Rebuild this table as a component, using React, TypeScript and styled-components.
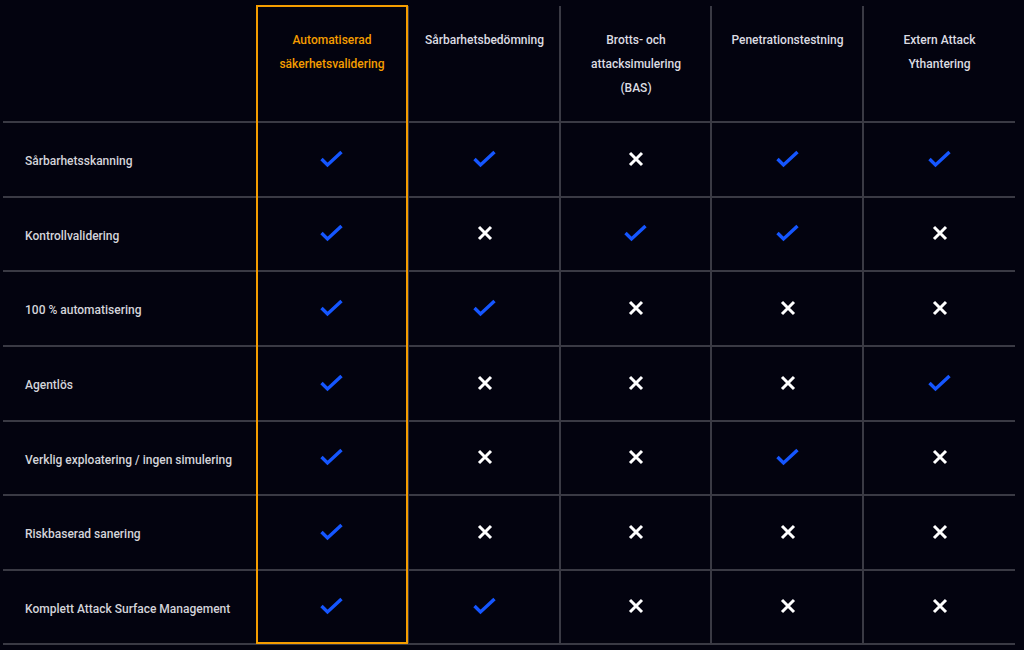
import React from "react";
import styled, { createGlobalStyle } from "styled-components";

const GlobalStyle = createGlobalStyle`
  html, body {
    margin: 0;
    padding: 0;
    background: #03030f;
  }
  body {
    font-family: Roboto, "Noto Sans", "Liberation Sans", sans-serif;
    -webkit-font-smoothing: antialiased;
  }
`;

const Page = styled.div`
  width: 1024px;
  height: 650px;
  background: #03030f;
  padding: 6px 0 0 3px;
  box-sizing: border-box;
  overflow: hidden;
`;

const Table = styled.div`
  display: grid;
  grid-template-columns: 253px 152px 152px 151px 152px 152px;
  grid-template-rows: 117px 75px 74px 75px 75px 74px 75px 74px;
`;

const Cell = styled.div<{ $col: number; $row: number; $header?: boolean }>`
  grid-column: ${(p) => p.$col + 1};
  grid-row: ${(p) => p.$row + 1};
  box-sizing: border-box;
  border-bottom: 2px solid #3a3a44;
  border-left: ${(p) => (p.$col >= 2 ? "2px solid #3a3a44" : "none")};
  margin-left: ${(p) => (p.$col >= 2 ? "-1px" : "0")};
  display: flex;
  justify-content: ${(p) => (p.$col === 0 ? "flex-start" : "center")};
  align-items: ${(p) => (p.$header ? "flex-start" : "center")};
`;

const HeaderText = styled.div<{ $accent?: boolean }>`
  padding: 22px 8px 0;
  font-size: 12px;
  font-weight: 500;
  line-height: 24px;
  text-align: center;
  color: ${(p) => (p.$accent ? "#f59d00" : "#dcdce2")};
`;

const Label = styled.div`
  padding: 3px 0 0 22px;
  font-size: 12px;
  font-weight: 500;
  color: #d4d4da;
`;

const Highlight = styled.div`
  grid-column: 2;
  grid-row: 1 / -1;
  margin-top: -1px;
  margin-bottom: 1px;
  border: 2px solid #f59d00;
  pointer-events: none;
  position: relative;
  z-index: 1;
`;

const IconWrap = styled.div`
  display: flex;
  align-items: center;
  justify-content: center;
  margin-top: -2px;
`;

const Check = () => (
  <IconWrap>
    <svg width="26" height="20" viewBox="0 0 26 20">
      <polyline
        points="2.5,10 8.5,16 22.5,3"
        fill="none"
        stroke="#1556ff"
        strokeWidth="3.4"
        strokeLinecap="butt"
        strokeLinejoin="miter"
      />
    </svg>
  </IconWrap>
);

const Cross = () => (
  <IconWrap>
    <svg width="16" height="16" viewBox="0 0 16 16">
      <path
        d="M2 2 L14 14 M14 2 L2 14"
        fill="none"
        stroke="#ffffff"
        strokeWidth="3"
        strokeLinecap="butt"
      />
    </svg>
  </IconWrap>
);

const headers: { text: string[]; accent?: boolean }[] = [
  { text: ["Automatiserad", "säkerhetsvalidering"], accent: true },
  { text: ["Sårbarhetsbedömning"] },
  { text: ["Brotts- och", "attacksimulering", "(BAS)"] },
  { text: ["Penetrationstestning"] },
  { text: ["Extern Attack", "Ythantering"] },
];

const rows: { label: string; values: boolean[] }[] = [
  { label: "Sårbarhetsskanning", values: [true, true, false, true, true] },
  { label: "Kontrollvalidering", values: [true, false, true, true, false] },
  { label: "100 % automatisering", values: [true, true, false, false, false] },
  { label: "Agentlös", values: [true, false, false, false, true] },
  { label: "Verklig exploatering / ingen simulering", values: [true, false, false, true, false] },
  { label: "Riskbaserad sanering", values: [true, false, false, false, false] },
  { label: "Komplett Attack Surface Management", values: [true, true, false, false, false] },
];

export default function App() {
  return (
    <>
      <GlobalStyle />
      <Page>
        <Table>
          <Cell $col={0} $row={0} $header />
          {headers.map((h, i) => (
            <Cell key={i} $col={i + 1} $row={0} $header>
              <HeaderText $accent={h.accent}>
                {h.text.map((t, j) => (
                  <div key={j}>{t}</div>
                ))}
              </HeaderText>
            </Cell>
          ))}
          {rows.map((r, ri) => (
            <React.Fragment key={ri}>
              <Cell $col={0} $row={ri + 1}>
                <Label>{r.label}</Label>
              </Cell>
              {r.values.map((v, ci) => (
                <Cell key={ci} $col={ci + 1} $row={ri + 1}>
                  {v ? <Check /> : <Cross />}
                </Cell>
              ))}
            </React.Fragment>
          ))}
          <Highlight />
        </Table>
      </Page>
    </>
  );
}
